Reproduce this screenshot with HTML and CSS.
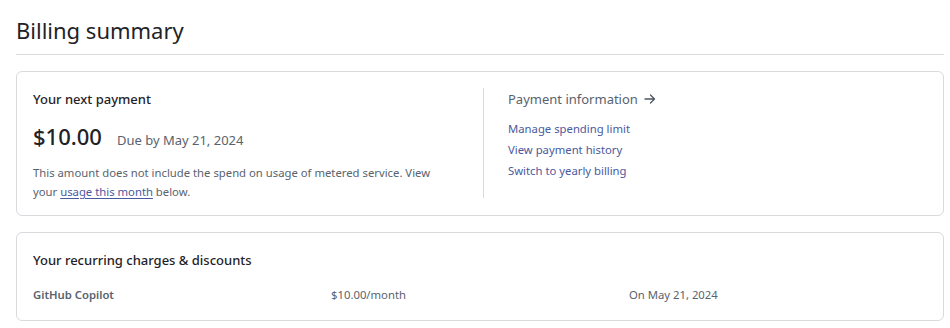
FILE: index.html
```html
<!DOCTYPE html>
<html lang="en">
<head>
    <meta charset="UTF-8">
    <title>Billing summary</title>
    <link rel="stylesheet" href="styles.css">
</head>
<body>
    <div class="page">
        <h1 class="page-title">Billing summary</h1>

        <div class="card payment-card">
            <div class="next-payment">
                <h2 class="card-title">Your next payment</h2>
                <div class="amount-row">
                    <span class="amount">$10.00</span>
                    <span class="due">Due by May 21, 2024</span>
                </div>
                <p class="note">
                    This amount does not include the spend on usage of metered service. View
                    your <a href="#" class="underline-link">usage this month</a> below.
                </p>
            </div>
            <div class="payment-info">
                <a href="#" class="info-title">Payment information
                    <svg class="arrow" width="12" height="12" viewBox="0 0 12 12" fill="none">
                        <path d="M1 6h9.5M6.5 2l4 4-4 4" stroke="currentColor" stroke-width="1.3" stroke-linecap="round" stroke-linejoin="round"/>
                    </svg>
                </a>
                <ul class="info-links">
                    <li><a href="#">Manage spending limit</a></li>
                    <li><a href="#">View payment history</a></li>
                    <li><a href="#">Switch to yearly billing</a></li>
                </ul>
            </div>
        </div>

        <div class="card charges-card">
            <h2 class="card-title">Your recurring charges &amp; discounts</h2>
            <div class="charge-row">
                <span class="charge-name">GitHub Copilot</span>
                <span class="charge-cell">$10.00/month</span>
                <span class="charge-cell">On May 21, 2024</span>
            </div>
        </div>
    </div>
</body>
</html>
```

FILE: styles.css
```css
:root {
    --text: #1f2328;
    --muted: #59636e;
    --border: #d8dadd;
    --link: #4a5a9e;
}

* {
    box-sizing: border-box;
    margin: 0;
    padding: 0;
}

body {
    font-family: "Noto Sans", "Open Sans", sans-serif;
    color: var(--text);
    background: #fff;
}

.page {
    padding: 0 6px 0 16px;
}

.page-title {
    font-size: 22px;
    font-weight: 400;
    line-height: 32px;
    padding: 14px 0 8px;
    border-bottom: 1px solid var(--border);
    margin-bottom: 16px;
}

.card {
    border: 1px solid var(--border);
    border-radius: 6px;
    padding: 16px;
}

.payment-card {
    display: grid;
    grid-template-columns: 1fr 1fr;
    margin-bottom: 16px;
    height: 145px;
}

.card-title {
    font-size: 13px;
    font-weight: 500;
    line-height: 22px;
}

.next-payment .card-title {
    margin-bottom: 11px;
}

.amount-row {
    display: flex;
    align-items: baseline;
    gap: 15px;
    margin-bottom: 12px;
}

.amount {
    font-size: 22px;
    font-weight: 500;
    line-height: 30px;
}

.due {
    font-size: 13px;
    color: var(--muted);
}

.note {
    font-size: 11.3px;
    line-height: 19px;
    color: var(--muted);
    max-width: 410px;
}

.underline-link {
    color: var(--link);
    text-decoration: underline;
    text-underline-offset: 2px;
}

.payment-info {
    border-left: 1px solid var(--border);
    padding-left: 24px;
    margin-left: 3px;
    height: 110px;
}

.info-title {
    display: flex;
    align-items: center;
    gap: 6px;
    font-size: 13px;
    line-height: 22px;
    color: var(--muted);
    text-decoration: none;
    margin-bottom: 8px;
}

.arrow {
    color: #4d5560;
}

.info-links {
    list-style: none;
}

.info-links li {
    font-size: 11.3px;
    line-height: 21px;
}

.info-links a {
    color: var(--link);
    text-decoration: none;
}

.charges-card {
    height: 89px;
}

.charges-card .card-title {
    margin-bottom: 15px;
}

.charge-row {
    display: grid;
    grid-template-columns: repeat(3, 1fr);
    font-size: 11.3px;
    line-height: 18px;
    color: var(--muted);
}

.charge-name {
    font-weight: 600;
}
```
